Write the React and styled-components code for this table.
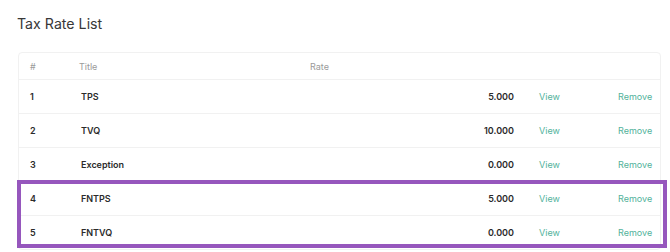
import styled, { createGlobalStyle } from "styled-components"

const GlobalStyle = createGlobalStyle`
  body {
    margin: 0;
    background: #ffffff;
    font-family: Inter, "Noto Sans", sans-serif;
  }
`;

const taxRates = [
  { id: 1, title: "TPS", rate: "5.000" },
  { id: 2, title: "TVQ", rate: "10.000" },
  { id: 3, title: "Exception", rate: "0.000" },
  { id: 4, title: "FNTPS", rate: "5.000" },
  { id: 5, title: "FNTVQ", rate: "0.000" },
];

function TaxRow({ item }) {
  return (
    <Row>
      <Cell>{item.id}</Cell>
      <Cell $indent={2}>{item.title}</Cell>
      <RateCell>{item.rate}</RateCell>
      <LinkCell $pad={25}>View</LinkCell>
      <LinkCell>Remove</LinkCell>
    </Row>
  );
}

export default function App() {
  const top = taxRates.slice(0, 3);
  const marked = taxRates.slice(3);

  return (
    <Page>
      <GlobalStyle />
      <Heading>Tax Rate List</Heading>
      <Card>
        <HeaderRow>
          <HeadCell>#</HeadCell>
          <HeadCell>Title</HeadCell>
          <HeadCell>Rate</HeadCell>
          <HeadCell />
          <HeadCell />
        </HeaderRow>
        {top.map((item) => (
          <TaxRow key={item.id} item={item} />
        ))}
        <Highlight>
          {marked.map((item) => (
            <TaxRow key={item.id} item={item} />
          ))}
        </Highlight>
      </Card>
    </Page>
  );
}

const Page = styled.div`
  padding: 15px 9px 0 18px;
  width: 670px;
  height: 252px;
  box-sizing: border-box;
  overflow: hidden;
`;

const Heading = styled.h2`
  margin: 0 0 20px -1px;
  font-size: 14.2px;
  font-weight: 400;
  color: #383838;
  line-height: 17px;
`;

const Card = styled.div`
  width: 643px;
  border: 1px solid #f1f1f1;
  border-radius: 4px;
  box-sizing: border-box;
`;

const grid = `
  display: grid;
  grid-template-columns: 49px 231px 204px 104px 1fr;
  align-items: center;
  padding-left: 11px;
`;

const HeaderRow = styled.div`
  ${grid}
  height: 26px;
  border-bottom: 1px solid #f1f1f1;
`;

const HeadCell = styled.div`
  font-size: 9px;
  color: #9a9a9a;
`;

const Row = styled.div`
  ${grid}
  height: 33px;
  border-bottom: 1px solid #f1f1f1;
  &:last-child {
    border-bottom: none;
  }
`;

const Cell = styled.div`
  font-size: 9px;
  font-weight: 600;
  color: #2b2b2b;
  padding-left: ${(p) => p.$indent || 0}px;
`;

const RateCell = styled(Cell)`
  text-align: right;
`;

const LinkCell = styled.div`
  font-size: 9px;
  color: #52b29b;
  padding-left: ${(p) => p.$pad || 0}px;
  cursor: pointer;
`;

const Highlight = styled.div`
  position: relative;
  &::after {
    content: "";
    position: absolute;
    top: -2px;
    left: -2px;
    right: -7px;
    bottom: 1px;
    border: 4px solid #9657bd;
    pointer-events: none;
  }
`;
